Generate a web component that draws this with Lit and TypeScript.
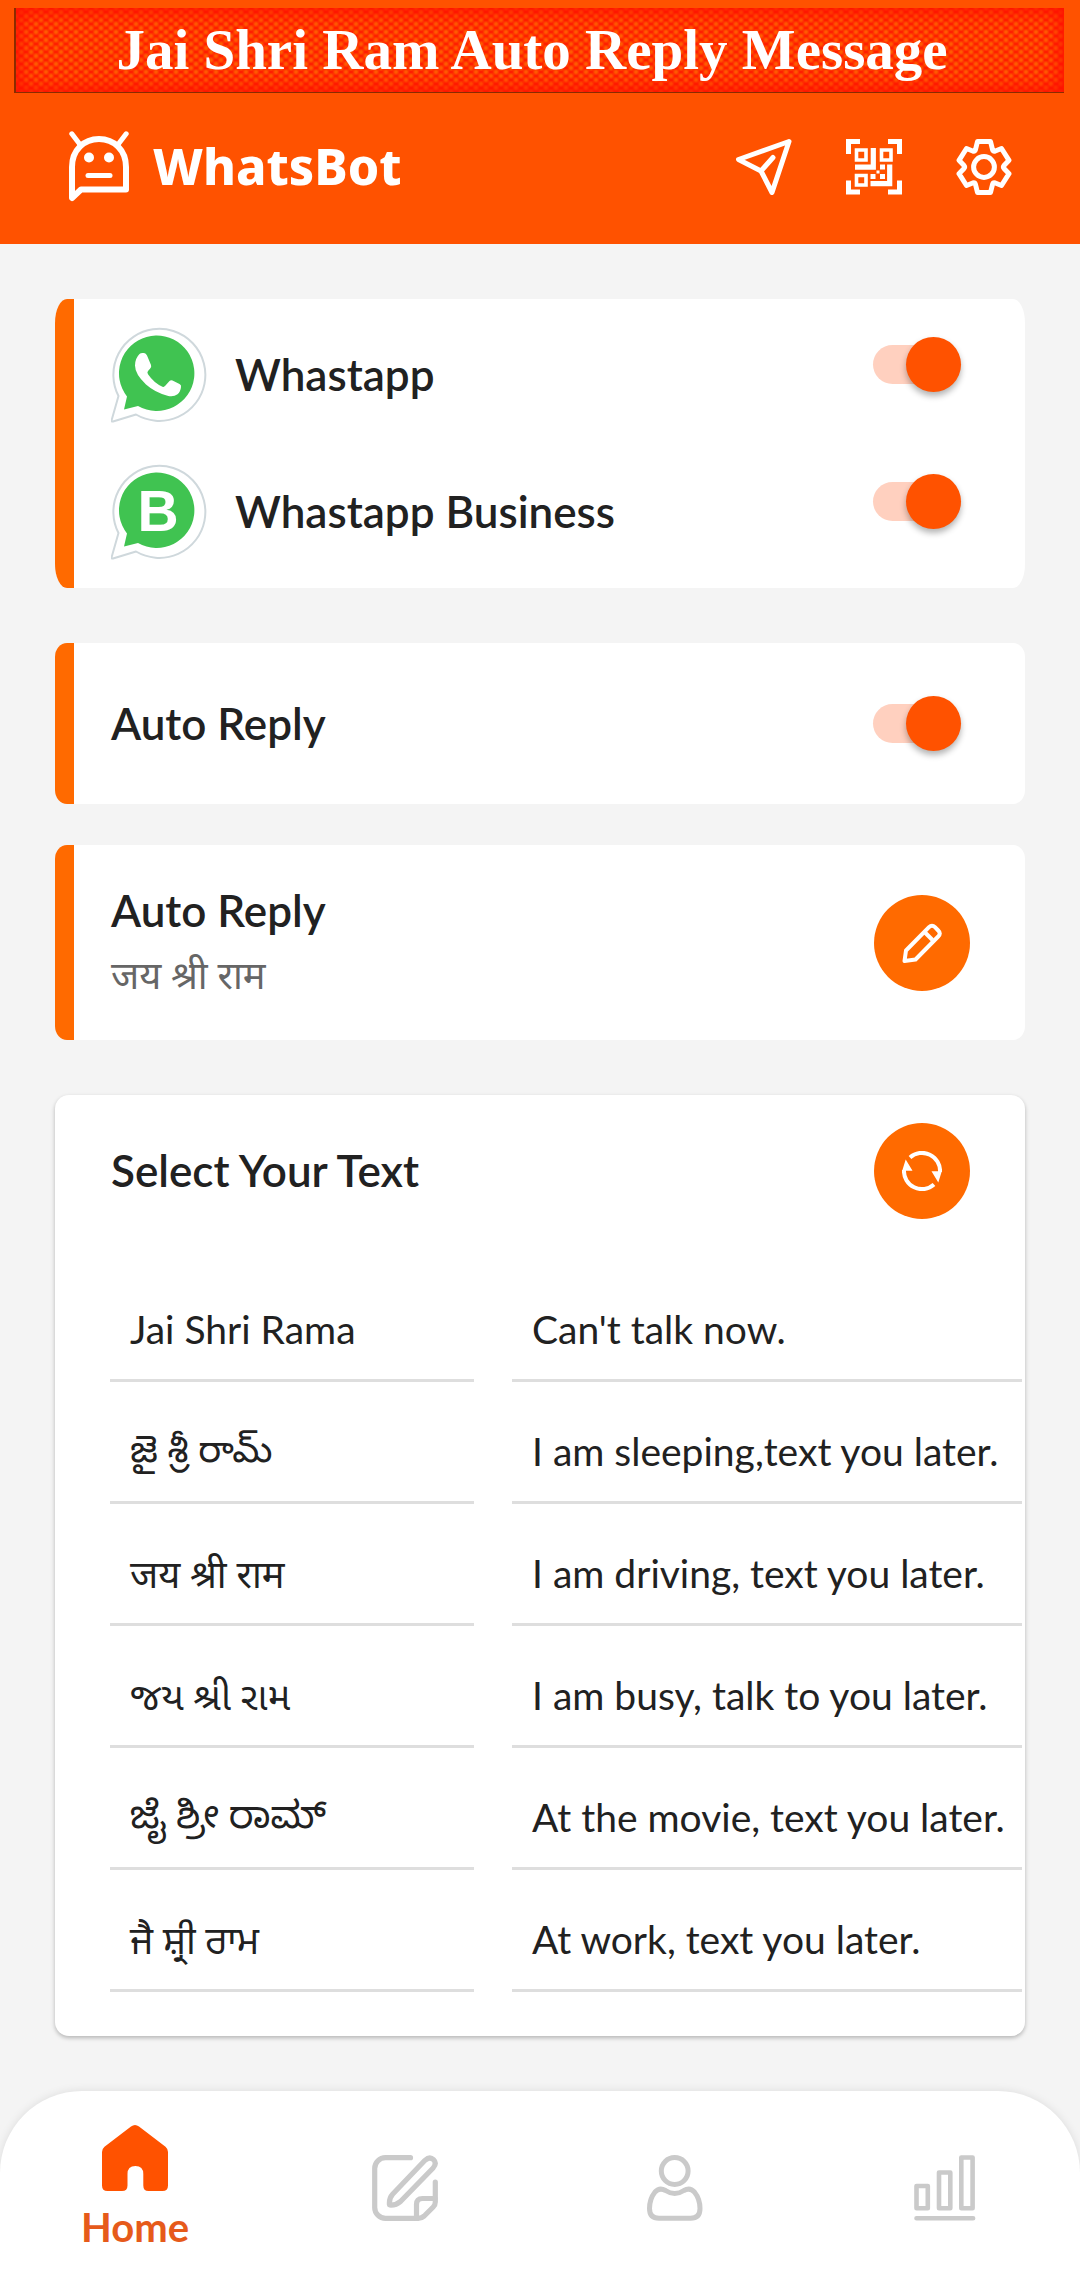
import { LitElement, html, css, svg } from "lit";
import { customElement, state } from "lit/decorators.js";

const logoIcon = svg`<svg class="logo" viewBox="0 0 60 72" fill="none" stroke="#fff" stroke-width="6" aria-hidden="true">
  <path d="M3 67V36C3 19 15 8 30 8s27 11 27 28v22.500H12z" stroke-linejoin="round"/>
  <path d="M2.800 2.800l8 10.500M57.200 2.800l-8 10.500" stroke-linecap="round" stroke-width="5"/>
  <path d="M19 44.500h22" stroke-linecap="round" stroke-width="5"/>
  <circle cx="20" cy="26.500" r="5" fill="#fff" stroke="none"/>
  <circle cx="40" cy="26.500" r="5" fill="#fff" stroke="none"/>
</svg>`;

const sendIcon = svg`<svg class="tool" viewBox="0 0 56 56" fill="none" stroke="#fff" stroke-width="5" stroke-linejoin="round" stroke-linecap="round" aria-hidden="true">
  <path d="M53 2.500L2.500 20.500 25 32l11 21.500z"/>
  <path d="M25 32L37 18.500"/>
</svg>`;

const qrIcon = svg`<svg class="tool" viewBox="0 0 56 56" fill="none" stroke="#fff" aria-hidden="true">
  <path d="M14 2.500H2.500V15M42 2.500h11.500V15M14 53H2.500V41.500M42 53h11.500V41.500" stroke-width="5"/>
  <path d="M10.500 11h9.500v10h-9.500zM35.500 11H45v10h-9.500zM10.500 36.500H20v9.500h-9.500z" stroke-width="3.600"/>
  <path d="M27.300 9v19.200H9M43.700 25.500v19.200H24.500" stroke-width="5.200"/>
  <path d="M34 25.500h5v5h-5zM24.500 35h5v5h-5zM34 35h5v5h-5zM30.500 31.500h3v3h-3z" fill="#fff" stroke="none"/>
</svg>`;

const gearIcon = svg`<svg class="tool" viewBox="0 0 56 56" fill="none" stroke="#fff" stroke-width="5" stroke-linejoin="round" aria-hidden="true">
  <path d="M21.500 2.500h13l2 8q.6 2 2.800 1.500l6.200-2.500 7.500 11.800-5 5.200q-1.200 1.500 0 3l5 5.200L45.500 46.500 39.300 44q-2.200-.5-2.800 1.500l-2 8h-13l-2-8q-.6-2-2.800-1.500l-6.200 2.500L3 34.700l5-5.200q1.200-1.500 0-3l-5-5.200L10.500 9.500l6.200 2.500q2.200.5 2.800-1.500z"/>
  <circle cx="28" cy="28" r="10.400"/>
</svg>`;

const bubble = svg`
  <path d="M7.500 69A46 46 0 1 1 25 87.500L2 94.500Q0 95 .8 92.500z" fill="#fff" stroke="#cfd8dc" stroke-width="2" stroke-linejoin="round"/>
  <path d="M16 69.500A37.700 37.700 0 1 1 27 79L13 82.500z" fill="#40c351"/>`;

const whatsappIcon = svg`<svg class="app-icon" viewBox="0 0 96 96" aria-hidden="true">${bubble}
  <path d="M33 26q2 0 3 2.500l4 9.500q.8 2-1 3.700l-2 2.300q-1.200 1.500 0 3.200Q43 56 51.500 59.700q1.500.6 2.500-.6l4.500-5q1.200-1.400 3-.6l7 3.500q2 1 1.500 3-.5 5-3.500 7.200-4 3-10 1.500Q44 65.500 35 57.500 24 47 24 38.500q0-7 4.500-11.500 1.500-1.500 4.500-1z" fill="#fff"/>
</svg>`;

const businessIcon = svg`<svg class="app-icon" viewBox="0 0 96 96" aria-hidden="true">${bubble}
  <text x="47" y="66.500" text-anchor="middle" font-family="Liberation Sans, Arial, sans-serif" font-weight="700" font-size="57" fill="#fff">B</text>
</svg>`;

const pencilIcon = svg`<svg class="glyph" viewBox="0 0 40 40" fill="none" stroke="#fff" stroke-width="4" stroke-linejoin="round" aria-hidden="true">
  <path d="M2.500 38l1.500-10.500L27 4.200q3-3 6 0l3.200 3.300q3 3 0 6L13.500 36.500z"/>
  <path d="M23 9.500l7.500 7.500"/>
</svg>`;

const refreshIcon = svg`<svg class="glyph" viewBox="0 0 40 40" fill="none" stroke="#fff" stroke-width="4" aria-hidden="true">
  <path d="M8 6.500A18 18 0 0 1 38 21M32 33.500A18 18 0 0 1 2 19"/>
  <path d="M29.500 20.300h10.300l-3.500 11.200zM10.500 19.700H.2l3.500-11.200z" fill="#fff" stroke="none"/>
</svg>`;

const homeIcon = svg`<svg class="nav-icon" viewBox="0 0 66 66" aria-hidden="true">
  <path d="M29 1.500q4-3 8 0l26.500 20.300Q66 24 66 27v33.500q0 5.500-5.500 5.500h-14q-5.200 0-5.200-5.500V49q0-8-7.900-8t-7.900 8v11.500q0 5.500-5.500 5.500H5.500Q0 66 0 60.500V27q0-3 2.500-5.200z" fill="#ff5200"/>
</svg>`;

const noteIcon = svg`<svg class="nav-icon" viewBox="0 0 66 66" fill="none" stroke="#cacaca" stroke-width="5.200" stroke-linecap="round" stroke-linejoin="round" aria-hidden="true">
  <path d="M38.500 2.700H13.500A10.800 10.800 0 0 0 2.700 13.500v39a10.800 10.800 0 0 0 10.800 10.800h32.700q3.500 0 6-2.300l9-9q2.100-2.100 2.100-5V27"/>
  <path d="M44.500 63V49.500q0-6 6-6H63"/>
  <path d="M53 5.300q4.700-4.300 8.500-.6t-.6 8.500L28.500 46.500q-4.500 4-11 3.500-.8-6.500 3.300-11z"/>
</svg>`;

const userIcon = svg`<svg class="nav-icon" viewBox="-5 0 66 66" fill="none" stroke="#cacaca" stroke-width="5" stroke-linejoin="round" aria-hidden="true">
  <circle cx="27.700" cy="16" r="13.400"/>
  <path d="M18.500 35.500q9.200 6 18.400 0 6-3.500 10.500 1.500 5.600 7 5.600 16.500 0 9.800-9.500 9.800H12q-9.500 0-9.500-9.800Q2.500 44 8 37q4.500-5 10.500-1.500z"/>
</svg>`;

const chartIcon = svg`<svg class="nav-icon" viewBox="-2 0 66 66" fill="none" stroke="#cacaca" stroke-width="4.600" stroke-linejoin="round" stroke-linecap="round" aria-hidden="true">
  <path d="M2.500 31h11.300v22.300H2.500zM25 17.500h11.300v35.800H25zM47.300 2.500h11.300v50.800H47.300zM2.500 63.300h56.600"/>
</svg>`;

const apps = [
  { id: "whatsapp", name: "Whastapp", icon: whatsappIcon },
  { id: "business", name: "Whastapp Business", icon: businessIcon },
];

const replies: [string, string, string][] = [
  ["en", "Jai Shri Rama", "Can't talk now."],
  ["te", "జై శ్రీ రామ్", "I am sleeping,text you later."],
  ["hi", "जय श्री राम", "I am driving, text you later."],
  ["gu", "જય શ્રી રામ", "I am busy, talk to you later."],
  ["kn", "ಜೈ ಶ್ರೀ ರಾಮ್", "At the movie, text you later."],
  ["pa", "ਜੈ ਸ਼੍ਰੀ ਰਾਮ", "At work, text you later."],
];

@customElement("app-root")
export class AppRoot extends LitElement {
  @state() private message = "जय श्री राम";

  static styles = css`
    :host {
      display: flex;
      flex-direction: column;
      min-height: 100vh;
      background: #f4f4f4;
      color: #212121;
      font-family: Lato, "Noto Sans", "Noto Sans Devanagari", "Noto Sans Telugu", "Noto Sans Gujarati",
        "Noto Sans Kannada", "Noto Sans Gurmukhi", sans-serif;
    }
    * {
      box-sizing: border-box;
    }
    h1, h2, p {
      margin: 0;
    }
    button {
      margin: 0;
      padding: 0;
      border: 0;
      background: none;
      color: inherit;
      font: inherit;
      cursor: pointer;
    }
    svg {
      display: block;
    }
    header {
      background: #ff5200;
      color: #fff;
      padding-top: 8px;
    }
    .banner {
      margin: 0 16px 0 14px;
      border-left: 2px solid #8a2c00;
      border-bottom: 1px solid #8a2c00;
      background-color: #ff1400;
      background-image:
        radial-gradient(circle, #ff5a00 1px, rgba(255, 40, 0, 0) 4px),
        radial-gradient(circle, #ff5a00 1px, rgba(255, 40, 0, 0) 4px);
      background-size: 10px 8px;
      background-position: 0 0, 5px 4px;
      box-shadow: inset 0 0 16px 4px #ff1000;
      font-family: "Liberation Serif", "Times New Roman", serif;
      font-size: 57px;
      font-weight: 700;
      line-height: 84px;
      text-align: center;
      white-space: nowrap;
      padding-right: 16px;
    }
    .toolbar {
      display: flex;
      align-items: center;
      padding: 38px 68px 41px 69px;
    }
    .logo {
      width: 60px;
      height: 72px;
    }
    .brand {
      flex: 1;
      margin-left: 24px;
      padding-bottom: 2px;
      font-family: "Noto Sans", "Open Sans", sans-serif;
      font-size: 50px;
      font-weight: 800;
      line-height: 70px;
    }
    .tools {
      display: flex;
      gap: 54px;
    }
    .tool {
      width: 56px;
      height: 56px;
    }
    main {
      flex: 1;
      display: flex;
      flex-direction: column;
      padding: 55px;
    }
    .card {
      background: #fff;
      border-radius: 12px / 14px;
      padding: 0 55px 0 37px;
      border-left: 19px solid #ff6a00;
    }
    .apps {
      display: grid;
      gap: 41px;
      padding-top: 28px;
      padding-bottom: 28px;
      border-radius: 12px / 24px;
    }
    .row {
      display: flex;
      align-items: center;
      justify-content: space-between;
    }
    .app-icon {
      width: 96px;
      height: 96px;
      margin-right: 28px;
    }
    .title {
      padding-bottom: 2px;
      font-size: 44px;
      font-weight: 600;
      line-height: 54px;
    }
    .app-name {
      flex: 1;
    }
    .switch {
      appearance: none;
      display: grid;
      align-items: center;
      width: 88px;
      height: 55px;
      margin: 0 9px 0 0;
      cursor: pointer;
    }
    .switch::before,
    .switch::after {
      content: "";
      grid-area: 1 / 1;
    }
    .switch::before {
      height: 39px;
      border-radius: 20px;
      background: #ffd0bf;
    }
    .switch::after {
      width: 55px;
      height: 55px;
      border-radius: 50%;
      background: #ff5200;
      box-shadow: 0 4px 6px rgba(0, 0, 0, 0.3);
    }
    .switch:checked::after {
      justify-self: end;
    }
    .apps .switch {
      margin-bottom: 22px;
    }
    .toggle-card {
      margin-top: 55px;
      min-height: 161px;
    }
    .message-card {
      margin-top: 41px;
      min-height: 195px;
    }
    .message {
      padding-top: 6px;
      color: #666;
      font-size: 38px;
      line-height: 58px;
    }
    .round {
      display: grid;
      place-items: center;
      width: 96px;
      height: 96px;
      border-radius: 50%;
      background: #ff6a00;
    }
    .glyph {
      width: 40px;
      height: 40px;
    }
    .picker {
      margin-top: 55px;
      padding-bottom: 44px;
      border-radius: 14px;
      background: #fff;
      box-shadow: 0 2px 4px rgba(0, 0, 0, 0.26);
    }
    .picker-head {
      padding: 28px 55px 41px 56px;
    }
    .choices {
      display: grid;
      grid-template-columns: 364fr 510fr;
      column-gap: 38px;
      padding: 0 3px 0 55px;
    }
    .choice {
      min-width: 0;
      height: 122px;
      padding: 18px 18px 0 20px;
      border-bottom: 3px solid #dedede;
      font-size: 39px;
      line-height: 50px;
      text-align: left;
      white-space: nowrap;
    }
    .choice.indic {
      font-size: 38px;
    }
    .choice:lang(te),
    .choice:lang(kn) {
      padding-top: 10px;
    }
    nav {
      display: grid;
      grid-template-columns: repeat(4, 1fr);
      height: 180px;
      border-radius: 82px 82px 0 0;
      background: #fff;
      box-shadow: 0 0 10px rgba(0, 0, 0, 0.1);
    }
    .tab {
      display: flex;
      flex-direction: column;
      align-items: center;
      justify-content: center;
      gap: 11px;
      padding-top: 14px;
      color: #e65a1a;
      font-size: 40px;
      font-weight: 700;
      line-height: 50px;
      text-decoration: none;
    }
    .nav-icon {
      width: 66px;
      height: 66px;
    }
  `;

  render() {
    return html`
      <header>
        <h1 class="banner">Jai Shri Ram Auto Reply Message</h1>
        <div class="toolbar">
          ${logoIcon}
          <span class="brand">WhatsBot</span>
          <div class="tools">
            <button aria-label="Send">${sendIcon}</button>
            <button aria-label="Scan code">${qrIcon}</button>
            <button aria-label="Settings">${gearIcon}</button>
          </div>
        </div>
      </header>
      <main>
        <section class="card apps">
          ${apps.map(
            (app) => html`<div class="row">
              ${app.icon}
              <label class="title app-name" for=${app.id}>${app.name}</label>
              <input class="switch" type="checkbox" id=${app.id} checked />
            </div>`
          )}
        </section>
        <section class="card row toggle-card">
          <label class="title" for="auto-reply">Auto Reply</label>
          <input class="switch" type="checkbox" id="auto-reply" checked />
        </section>
        <section class="card row message-card">
          <div>
            <h2 class="title">Auto Reply</h2>
            <p class="message">${this.message}</p>
          </div>
          <button class="round" aria-label="Edit message">${pencilIcon}</button>
        </section>
        <section class="picker">
          <div class="row picker-head">
            <h2 class="title">Select Your Text</h2>
            <button class="round" aria-label="Refresh">${refreshIcon}</button>
          </div>
          <div class="choices">
            ${replies.map(
              ([lang, greeting, status]) => html`
                <button
                  class=${lang === "en" ? "choice" : "choice indic"}
                  lang=${lang}
                  @click=${() => (this.message = greeting)}
                >${greeting}</button>
                <button class="choice" @click=${() => (this.message = status)}>${status}</button>
              `
            )}
          </div>
        </section>
      </main>
      <nav>
        <a class="tab" href="#home">${homeIcon}<span>Home</span></a>
        <a class="tab" href="#edit" aria-label="Edit">${noteIcon}</a>
        <a class="tab" href="#profile" aria-label="Profile">${userIcon}</a>
        <a class="tab" href="#stats" aria-label="Statistics">${chartIcon}</a>
      </nav>
    `;
  }
}
